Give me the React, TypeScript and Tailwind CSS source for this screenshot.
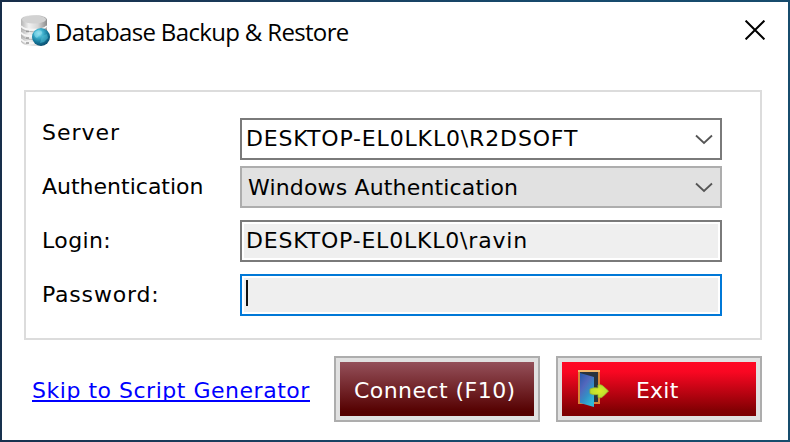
import React from "react";

const verdana = "font-['Verdana','DejaVu_Sans',sans-serif] text-[22px] leading-[26px] whitespace-pre";

function DatabaseIcon() {
  return (
    <svg width="32" height="34" viewBox="0 0 32 34">
      <defs>
        <linearGradient id="drum" x1="0" x2="1">
          <stop offset="0" stopColor="#b4b4b4" />
          <stop offset="0.3" stopColor="#f1f1f1" />
          <stop offset="0.65" stopColor="#d6d6d6" />
          <stop offset="1" stopColor="#8c8c8c" />
        </linearGradient>
        <radialGradient id="globe" cx="0.38" cy="0.3" r="0.75">
          <stop offset="0" stopColor="#a5e4f2" />
          <stop offset="0.3" stopColor="#43b4d0" />
          <stop offset="0.65" stopColor="#14789b" />
          <stop offset="1" stopColor="#0a4768" />
        </radialGradient>
      </defs>
      <path d="M1 6C1 3 7 1 14 1s13 2 13 5v21c0 3-6 5-13 5S1 30 1 27z" fill="url(#drum)" />
      <ellipse cx="14" cy="5.5" rx="12" ry="4" fill="#d2d2d2" />
      <path d="M1 12c3 5 22 5 26 0M1 18.5c3 5 22 5 26 0M1 25c3 4 12 5 18 3" fill="none" stroke="#f5f5f5" strokeWidth="2" />
      <path d="M1 14c3 5 22 5 26 0M1 21c3 4 9 5 13 4" fill="none" stroke="#b3b3b3" strokeWidth="1" />
      <path d="M6 17.5h3M6 24h3M6 29h3" stroke="#999" strokeWidth="1.5" />
      <circle cx="21" cy="23" r="9" fill="url(#globe)" />
      <path d="M14 19c3-4 7-3 8-1s-3 3-4 5-4 0-4-4z" fill="#8bdced" opacity="0.6" />
      <path d="M22 22l5-2 1 4-4 4-4 1z" fill="#53c1d6" opacity="0.5" />
    </svg>
  );
}

function ExitIcon() {
  return (
    <svg width="34" height="40" viewBox="0 0 34 40">
      <defs>
        <linearGradient id="door" x1="0" y1="0" x2="0.6" y2="1">
          <stop offset="0" stopColor="#2558a8" />
          <stop offset="0.4" stopColor="#5267bd" />
          <stop offset="0.7" stopColor="#348fc5" />
          <stop offset="1" stopColor="#30b8d7" />
        </linearGradient>
        <radialGradient id="arrow">
          <stop offset="0" stopColor="#dcec28" />
          <stop offset="1" stopColor="#b4dc30" />
        </radialGradient>
      </defs>
      <path d="M1 1h22v34H1z" fill="#d88639" />
      <path d="M1 1h22v2H1z" fill="#f1b970" />
      <path d="M3 3h18v30H3z" fill="#29333e" />
      <path d="M3 4l14 4v30L3 34z" fill="url(#door)" />
      <path d="M13 20q4-2 8-1v-3q3-1 5 1l5.500 5-5.500 5.500q-2 2-5 1v-3q-4 1-8-1z" fill="url(#arrow)" stroke="#a0b52c" strokeWidth="0.8" strokeLinejoin="round" />
    </svg>
  );
}

function Chevron() {
  return (
    <svg width="18" height="12" viewBox="0 0 18 12" className="ml-auto mr-[7px] shrink-0">
      <path d="M1 2.500l8 7.500 8-7.500" fill="none" stroke="#555" strokeWidth="1.8" />
    </svg>
  );
}

export default function App() {
  return (
    <div className="h-[442px] w-[790px] bg-[linear-gradient(100deg,#172d49_0%,#1a3e5e_35%,#164a6d_65%,#174c6c_100%)] p-[2px]">
      <div className="flex h-[438px] flex-col bg-white text-black">
        <header className="flex h-[88px] shrink-0 items-start pl-[18px] pr-[23px]">
          <div className="mt-[12px] w-[35px]"><DatabaseIcon /></div>
          <h1 className="mt-[13px] whitespace-pre font-['Segoe_UI','Open_Sans',sans-serif] text-[24px] leading-[34px] tracking-[-0.66px]">Database Backup &amp; Restore</h1>
          <button aria-label="Close" className="ml-auto mt-[18px]">
            <svg width="20" height="20" viewBox="0 0 20 20">
              <path d="M.6.6l18.8 18.8M19.4.6L.6 19.4" stroke="#000" strokeWidth="2" />
            </svg>
          </button>
        </header>

        <main className="ml-[22px] flex h-[250px] w-[738px] shrink-0 border-2 border-[#dcdcdc] pl-[16px]">
          <div className={`flex w-[198px] flex-col gap-[28px] pt-[28px] ${verdana}`}>
            <label className="tracking-[1px]">Server</label>
            <label>Authentication</label>
            <label className="tracking-[0.4px]">Login:</label>
            <label className="tracking-[0.8px]">Password:</label>
          </div>
          <div className={`flex w-[482px] flex-col pt-[26px] ${verdana}`}>
            <div className="flex h-[42px] items-center border-2 border-[#7a7a7a] bg-white pl-[4px]">
              <span className="tracking-[0.85px]">DESKTOP-EL0LKL0\R2DSOFT</span>
              <Chevron />
            </div>
            <div className="mt-[6px] flex h-[42px] items-center border-2 border-[#adadad] bg-[#e1e1e1] pl-[6px]">
              <span className="pt-[2px] tracking-[0.16px]">Windows Authentication</span>
              <Chevron />
            </div>
            <div className="mt-[12px] flex h-[42px] items-center border-2 border-[#7a7a7a] bg-white p-[2px]">
              <div className="flex h-[34px] flex-1 items-center bg-[#efefef] pl-[2px] tracking-[0.8px]">DESKTOP-EL0LKL0\ravin</div>
            </div>
            <div className="mt-[12px] flex h-[42px] border-2 border-[#0078d7] bg-white p-[2px]">
              <div className="flex h-[34px] flex-1 bg-[#efefef] pl-[2px] pt-[2px]">
                <span className="h-[26px] w-[2px] bg-[#101010]" />
              </div>
            </div>
          </div>
        </main>

        <footer className={`flex items-start pl-[30px] pt-[16px] ${verdana}`}>
          <a className="mt-[20px] w-[278px] text-[#0000ff]">
            <span className="block h-[26px] border-b-2 border-[#0000ff] leading-[29px] tracking-[0.52px]">Skip to Script Generator</span>
          </a>
          <button className="ml-[24px] h-[66px] w-[206px] border-2 border-[#adadad] bg-[#e1e1e1] p-[4px] text-white">
            <span className="flex h-[54px] items-center bg-[linear-gradient(#94505a,#550000_92%)] pl-[14px] pt-[3px] tracking-[0.45px]">Connect (F10)</span>
          </button>
          <button className="ml-[16px] h-[66px] w-[206px] border-2 border-[#adadad] bg-[#e1e1e1] p-[4px] text-white">
            <span className="flex h-[54px] items-center bg-[linear-gradient(#ff0824,#f90722_18%,#820003_90%,#7c0002)] pl-[15px]">
              <ExitIcon />
              <span className="ml-[25px] pt-[3px] tracking-[0.2px]">Exit</span>
            </span>
          </button>
        </footer>
      </div>
    </div>
  );
}
